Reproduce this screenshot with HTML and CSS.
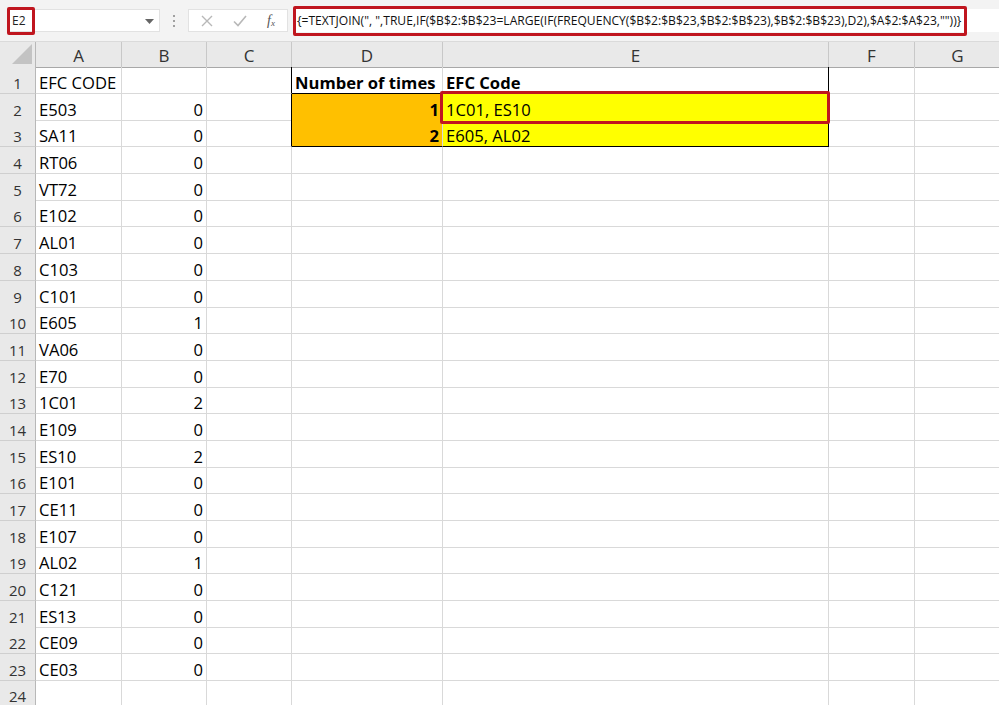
FILE: index.html
```html
<!DOCTYPE html>
<html>
<head>
<meta charset="utf-8">
<link rel="stylesheet" href="styles.css">
</head>
<body>
<div class="app">
  <div class="toolbar">
    <div class="namebox">
      <span class="name">E2</span>
      <svg class="dd" width="9" height="5" viewBox="0 0 9 5"><path d="M0 0h9L4.5 5z" fill="#666"/></svg>
      <div class="hl hl-name"></div>
    </div>
    <div class="sep"><i></i><i></i><i></i></div>
    <div class="fbtns">
      <svg width="12" height="12" viewBox="0 0 12 12"><path d="M1 1l10 10M11 1L1 11" stroke="#b8b8b8" stroke-width="1.4" fill="none"/></svg>
      <svg width="14" height="12" viewBox="0 0 14 12"><path d="M1 6.5l4 4L13 1" stroke="#b8b8b8" stroke-width="1.6" fill="none"/></svg>
      <span class="fx">f<sub>x</sub></span>
    </div>
    <div class="formula">
      <span class="ftext">{=TEXTJOIN(", ",TRUE,IF($B$2:$B$23=LARGE(IF(FREQUENCY($B$2:$B$23,$B$2:$B$23),$B$2:$B$23),D2),$A$2:$A$23,""))}</span>
      <div class="hl hl-formula"></div>
    </div>
  </div>
  <div class="sheet">
    <div class="row head">
      <div class="corner"><svg width="20" height="20" viewBox="0 0 20 20"><path d="M20 0V20H0z" fill="#c3c3c3"/></svg></div>
      <div class="ch">A</div><div class="ch">B</div><div class="ch">C</div><div class="ch">D</div><div class="ch">E</div><div class="ch">F</div><div class="ch">G</div>
    </div>
    <div class="row">
      <div class="rh">1</div><div class="c">EFC CODE</div><div class="c"></div><div class="c bR"></div><div class="c b bB">Number of times</div><div class="c b bB bR">EFC Code</div><div class="c"></div><div class="c"></div>
    </div>
    <div class="row">
      <div class="rh">2</div><div class="c">E503</div><div class="c num">0</div><div class="c bR"></div><div class="c b num org bB">1</div><div class="c yel bB bR">1C01, ES10<div class="hl hl-cell"></div></div><div class="c"></div><div class="c"></div>
    </div>
    <div class="row">
      <div class="rh">3</div><div class="c">SA11</div><div class="c num">0</div><div class="c bR"></div><div class="c b num org bB">2</div><div class="c yel bB bR">E605, AL02</div><div class="c"></div><div class="c"></div>
    </div>
    <div class="row"><div class="rh">4</div><div class="c">RT06</div><div class="c num">0</div><div class="c"></div><div class="c"></div><div class="c"></div><div class="c"></div><div class="c"></div></div>
    <div class="row"><div class="rh">5</div><div class="c">VT72</div><div class="c num">0</div><div class="c"></div><div class="c"></div><div class="c"></div><div class="c"></div><div class="c"></div></div>
    <div class="row"><div class="rh">6</div><div class="c">E102</div><div class="c num">0</div><div class="c"></div><div class="c"></div><div class="c"></div><div class="c"></div><div class="c"></div></div>
    <div class="row"><div class="rh">7</div><div class="c">AL01</div><div class="c num">0</div><div class="c"></div><div class="c"></div><div class="c"></div><div class="c"></div><div class="c"></div></div>
    <div class="row"><div class="rh">8</div><div class="c">C103</div><div class="c num">0</div><div class="c"></div><div class="c"></div><div class="c"></div><div class="c"></div><div class="c"></div></div>
    <div class="row"><div class="rh">9</div><div class="c">C101</div><div class="c num">0</div><div class="c"></div><div class="c"></div><div class="c"></div><div class="c"></div><div class="c"></div></div>
    <div class="row"><div class="rh">10</div><div class="c">E605</div><div class="c num">1</div><div class="c"></div><div class="c"></div><div class="c"></div><div class="c"></div><div class="c"></div></div>
    <div class="row"><div class="rh">11</div><div class="c">VA06</div><div class="c num">0</div><div class="c"></div><div class="c"></div><div class="c"></div><div class="c"></div><div class="c"></div></div>
    <div class="row"><div class="rh">12</div><div class="c">E70</div><div class="c num">0</div><div class="c"></div><div class="c"></div><div class="c"></div><div class="c"></div><div class="c"></div></div>
    <div class="row"><div class="rh">13</div><div class="c">1C01</div><div class="c num">2</div><div class="c"></div><div class="c"></div><div class="c"></div><div class="c"></div><div class="c"></div></div>
    <div class="row"><div class="rh">14</div><div class="c">E109</div><div class="c num">0</div><div class="c"></div><div class="c"></div><div class="c"></div><div class="c"></div><div class="c"></div></div>
    <div class="row"><div class="rh">15</div><div class="c">ES10</div><div class="c num">2</div><div class="c"></div><div class="c"></div><div class="c"></div><div class="c"></div><div class="c"></div></div>
    <div class="row"><div class="rh">16</div><div class="c">E101</div><div class="c num">0</div><div class="c"></div><div class="c"></div><div class="c"></div><div class="c"></div><div class="c"></div></div>
    <div class="row"><div class="rh">17</div><div class="c">CE11</div><div class="c num">0</div><div class="c"></div><div class="c"></div><div class="c"></div><div class="c"></div><div class="c"></div></div>
    <div class="row"><div class="rh">18</div><div class="c">E107</div><div class="c num">0</div><div class="c"></div><div class="c"></div><div class="c"></div><div class="c"></div><div class="c"></div></div>
    <div class="row"><div class="rh">19</div><div class="c">AL02</div><div class="c num">1</div><div class="c"></div><div class="c"></div><div class="c"></div><div class="c"></div><div class="c"></div></div>
    <div class="row"><div class="rh">20</div><div class="c">C121</div><div class="c num">0</div><div class="c"></div><div class="c"></div><div class="c"></div><div class="c"></div><div class="c"></div></div>
    <div class="row"><div class="rh">21</div><div class="c">ES13</div><div class="c num">0</div><div class="c"></div><div class="c"></div><div class="c"></div><div class="c"></div><div class="c"></div></div>
    <div class="row"><div class="rh">22</div><div class="c">CE09</div><div class="c num">0</div><div class="c"></div><div class="c"></div><div class="c"></div><div class="c"></div><div class="c"></div></div>
    <div class="row"><div class="rh">23</div><div class="c">CE03</div><div class="c num">0</div><div class="c"></div><div class="c"></div><div class="c"></div><div class="c"></div><div class="c"></div></div>
    <div class="row last"><div class="rh">24</div><div class="c"></div><div class="c"></div><div class="c"></div><div class="c"></div><div class="c"></div><div class="c"></div><div class="c"></div></div>
  </div>
</div>
</body>
</html>
```

FILE: styles.css
```css
* { box-sizing: border-box; }
html, body { margin: 0; padding: 0; }
body { width: 999px; height: 705px; overflow: hidden; background: #fff; font-family: "Open Sans", "Noto Sans", sans-serif; color: #000; }
.app { width: 999px; height: 705px; overflow: hidden; }

.toolbar { height: 42px; background: #f3f3f3; display: flex; align-items: center; padding: 0 0 0 8px; border-bottom: 1px solid #dadada; }
.namebox { position: relative; width: 152px; height: 23px; background: #fff; border: 1px solid #e2e2e2; display: flex; align-items: center; justify-content: space-between; padding: 0 5px 0 3px; }
.name { font-size: 12px; color: #222; }
.dd { margin-top: 1px; }
.hl { position: absolute; border: 3px solid #c0161f; border-radius: 2px; pointer-events: none; z-index: 10; }
.hl-name { left: -2px; top: -3px; width: 28px; height: 28px; }
.sep { width: 28px; display: flex; flex-direction: column; align-items: center; gap: 3px; }
.sep i { width: 2px; height: 2px; background: #a0a0a0; display: block; }
.fbtns { width: 100px; height: 23px; background: #fff; border: 1px solid #e2e2e2; display: flex; align-items: center; justify-content: space-between; padding: 0 12px 0 12px; }
.fx { font-family: "Liberation Serif", serif; font-style: italic; font-size: 14px; color: #555; }
.fx sub { font-size: 9px; vertical-align: -1px; }
.formula { position: relative; flex: 1; height: 23px; background: #fff; margin-left: 5px; display: flex; align-items: center; padding-left: 4px; }
.ftext { font-size: 12.1px; color: #111; white-space: nowrap; }
.hl-formula { left: 0; top: -3px; width: 674px; height: 30px; }

.sheet { display: flex; flex-direction: column; }
.row { display: grid; grid-template-columns: 36px 86px 85px 85px 151px 386px 86px 86px; height: 26.7px; flex: none; }
.row.head { height: 25px; }
.corner { background: #e9e9e9; border-right: 1px solid #b8b8b8; border-bottom: 1px solid #a8a8a8; display: flex; align-items: flex-end; justify-content: flex-end; padding: 0 3px 3px 0; }
.ch { background: #e9e9e9; border-right: 1px solid #c8c8c8; border-bottom: 1px solid #a8a8a8; display: flex; align-items: center; justify-content: center; font-size: 17px; color: #333; padding-top: 2px; }
.rh { background: #e9e9e9; border-right: 1px solid #b8b8b8; border-bottom: 1px solid #cfcfcf; text-align: center; font-size: 15px; line-height: 20px; padding-top: 6px; color: #333; }
.row.last .rh { line-height: 15px; padding-top: 8px; }
.c { position: relative; border-right: 1px solid #d9d9d9; border-bottom: 1px solid #d9d9d9; font-size: 16.6px; line-height: 20px; padding: 6px 3px 0; white-space: nowrap; }
.c.num { text-align: right; }
.c.b { font-weight: bold; }
.bR { border-right-color: #000; }
.bB { border-bottom-color: #000; }
.org { background: #ffc000; }
.yel { background: #ffff00; }
.hl-cell { left: -3px; top: -3px; width: 390px; height: 33px; }
```
